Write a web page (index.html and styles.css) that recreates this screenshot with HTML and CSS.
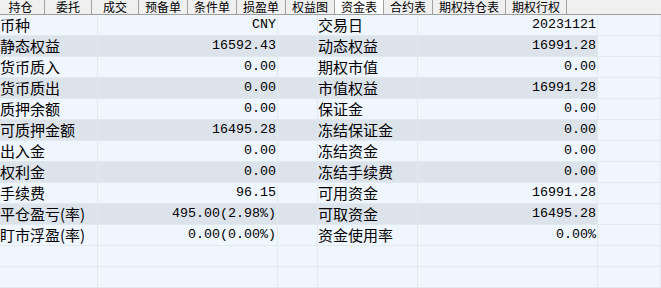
FILE: index.html
```html
<!DOCTYPE html>
<html lang="zh-CN">
<head>
<meta charset="utf-8">
<title>资金表</title>
<link rel="stylesheet" href="styles.css">
</head>
<body>
<div class="tabs">
  <div class="tab">持仓</div>
  <div class="tab">委托</div>
  <div class="tab">成交</div>
  <div class="tab">预备单</div>
  <div class="tab">条件单</div>
  <div class="tab">损盈单</div>
  <div class="tab">权益图</div>
  <div class="tab active">资金表</div>
  <div class="tab">合约表</div>
  <div class="tab">期权持仓表</div>
  <div class="tab">期权行权</div>
</div>
<div class="grid">
  <div class="row"><div class="lbl">币种</div><div class="val">CNY</div><div class="gap"></div><div class="lbl">交易日</div><div class="val">20231121</div><div class="rest"></div></div>
  <div class="row alt"><div class="lbl">静态权益</div><div class="val">16592.43</div><div class="gap"></div><div class="lbl">动态权益</div><div class="val">16991.28</div><div class="rest"></div></div>
  <div class="row"><div class="lbl">货币质入</div><div class="val">0.00</div><div class="gap"></div><div class="lbl">期权市值</div><div class="val">0.00</div><div class="rest"></div></div>
  <div class="row alt"><div class="lbl">货币质出</div><div class="val">0.00</div><div class="gap"></div><div class="lbl">市值权益</div><div class="val">16991.28</div><div class="rest"></div></div>
  <div class="row"><div class="lbl">质押余额</div><div class="val">0.00</div><div class="gap"></div><div class="lbl">保证金</div><div class="val">0.00</div><div class="rest"></div></div>
  <div class="row alt"><div class="lbl">可质押金额</div><div class="val">16495.28</div><div class="gap"></div><div class="lbl">冻结保证金</div><div class="val">0.00</div><div class="rest"></div></div>
  <div class="row"><div class="lbl">出入金</div><div class="val">0.00</div><div class="gap"></div><div class="lbl">冻结资金</div><div class="val">0.00</div><div class="rest"></div></div>
  <div class="row alt"><div class="lbl">权利金</div><div class="val">0.00</div><div class="gap"></div><div class="lbl">冻结手续费</div><div class="val">0.00</div><div class="rest"></div></div>
  <div class="row"><div class="lbl">手续费</div><div class="val">96.15</div><div class="gap"></div><div class="lbl">可用资金</div><div class="val">16991.28</div><div class="rest"></div></div>
  <div class="row alt"><div class="lbl">平仓盈亏(率)</div><div class="val">495.00(2.98%)</div><div class="gap"></div><div class="lbl">可取资金</div><div class="val">16495.28</div><div class="rest"></div></div>
  <div class="row"><div class="lbl">盯市浮盈(率)</div><div class="val">0.00(0.00%)</div><div class="gap"></div><div class="lbl">资金使用率</div><div class="val">0.00%</div><div class="rest"></div></div>
  <div class="row empty"><div class="lbl"></div><div class="val"></div><div class="gap"></div><div class="lbl"></div><div class="val"></div><div class="rest"></div></div>
  <div class="row empty"><div class="lbl"></div><div class="val"></div><div class="gap"></div><div class="lbl"></div><div class="val"></div><div class="rest"></div></div>
</div>
</body>
</html>
```
FILE: styles.css
```css
html, body {
  margin: 0;
  padding: 0;
  background: #f0f6fe;
  overflow: hidden;
}
body {
  width: 661px;
  height: 288px;
  font-family: "Noto Sans CJK SC", "Liberation Sans", sans-serif;
  color: #000;
}
.tabs {
  display: flex;
  height: 14px;
  background: #f0f0f0;
  border-bottom: 1px solid #a0a0a0;
  margin-left: -3px;
}
.tab {
  min-width: 47px;
  padding: 0 6px;
  box-sizing: border-box;
  font-size: 12px;
  line-height: 13px;
  text-align: center;
  border-right: 1px solid #a0a0a0;
  color: #000;
  white-space: nowrap;
}
.tab:first-child {
  min-width: 48px;
}
.tab.active {
  background: #ffffff;
}
.grid {
  display: flex;
  flex-direction: column;
}
.row {
  display: grid;
  grid-template-columns: 98px 180px 40px 100px 180px 1fr;
  height: 21px;
  box-sizing: border-box;
}
.row > div {
  border-right: 1px solid #e3e9f0;
  border-bottom: 1px solid #e3e9f0;
  box-sizing: border-box;
  height: 21px;
  line-height: 20px;
  white-space: nowrap;
  overflow: hidden;
}
.lbl {
  font-size: 15px;
  padding-left: 0;
}
.val {
  font-family: "Liberation Mono", monospace;
  font-size: 13.33px;
  text-align: right;
  padding-right: 1px;
}
.row.alt .lbl,
.row.alt .val,
.row.alt .gap {
  background: #dde3eb;
}
.rest {
  background: #f0f6fe;
}
```
